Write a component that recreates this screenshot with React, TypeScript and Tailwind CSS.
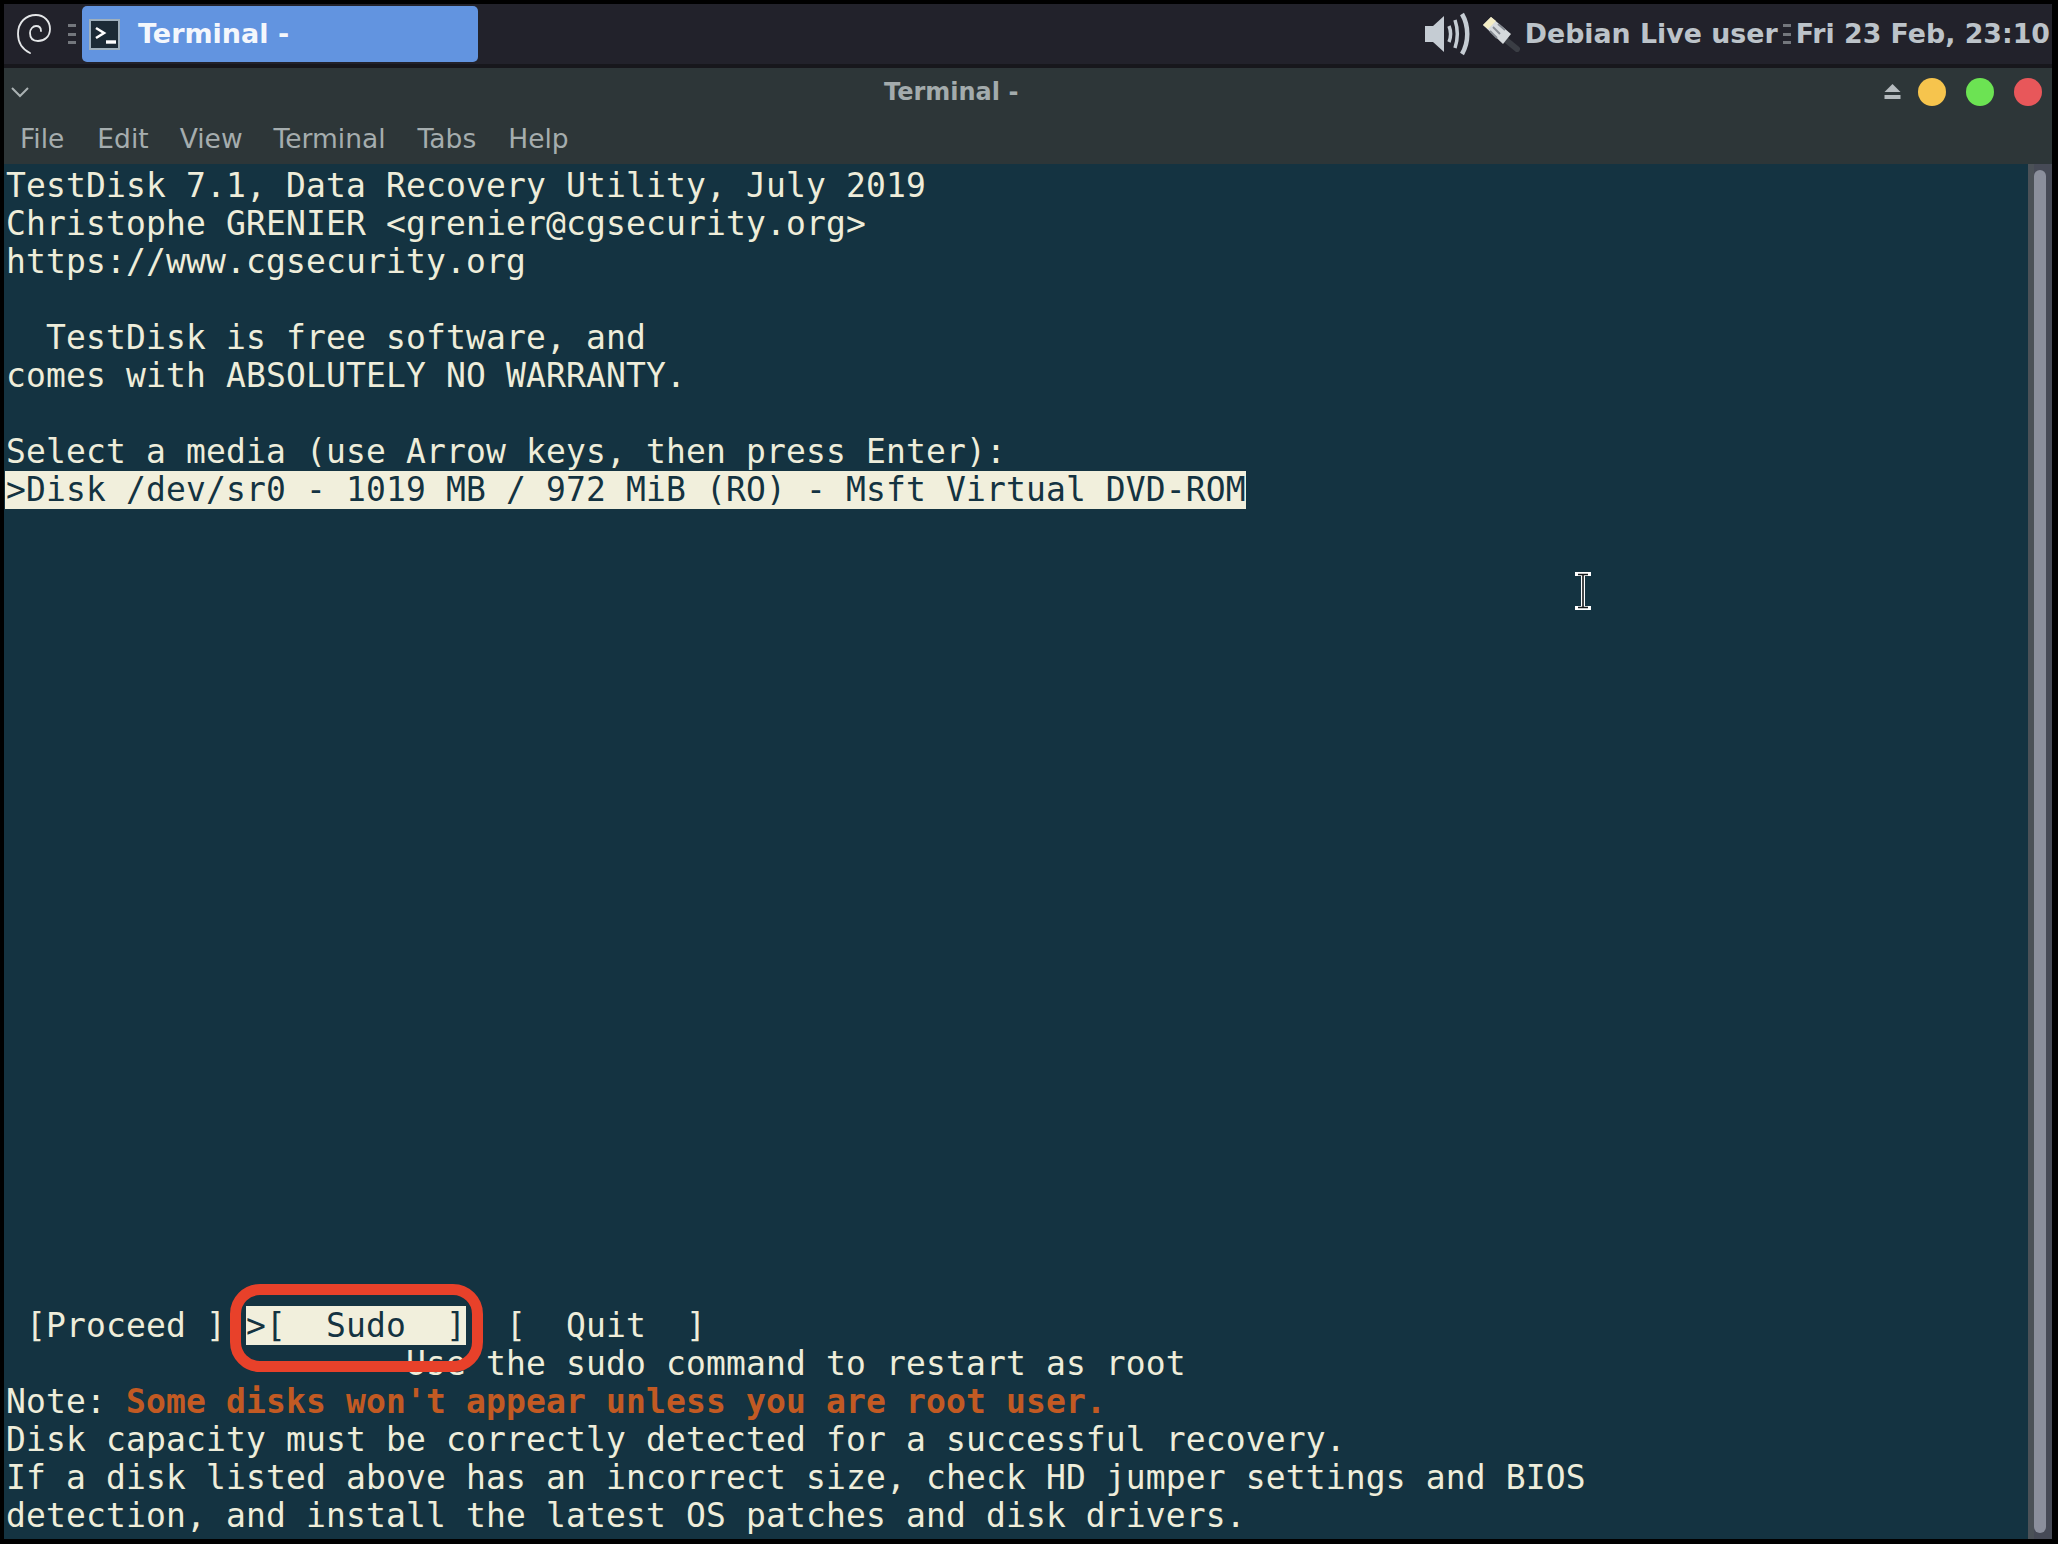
const mono = "font-['DejaVu_Sans_Mono',monospace]";

const TermLine = ({ children }: { children?: React.ReactNode }) => (
  <div className="h-[38px] pl-[2px] leading-[38px] whitespace-pre">{children}</div>
);

const DebianSwirl = () => (
  <svg width="34" height="42" viewBox="0 0 34 42" fill="none" className="shrink-0">
    <path
      d="M13 40C5 36 1 29 1 21C1 9 9 2 19 2C27 2 33 8 33 16C33 24 27 28 21 28C16 28 13 25 13 20C13 16 16 13 19 13C22 13 24 15 24 18"
      stroke="#e4e6e8"
      strokeWidth="1.8"
      strokeLinecap="round"
    />
  </svg>
);

const Handle = () => (
  <div className="flex h-[20px] w-[8px] shrink-0 flex-col justify-between">
    <div className="h-[3px] bg-[#74777d]" />
    <div className="h-[3px] bg-[#74777d]" />
    <div className="h-[3px] bg-[#74777d]" />
  </div>
);

const TerminalIcon = () => (
  <div className="relative ml-[7px] h-[31px] w-[31px] shrink-0 border-2 border-[#9fb0bd] bg-[#1c2b36]">
    <svg width="27" height="27" viewBox="0 0 27 27" fill="none">
      <path d="M5 7L13 12L5 17" stroke="#fff" strokeWidth="2.6" />
      <path d="M15 21H25" stroke="#fff" strokeWidth="3.4" />
    </svg>
  </div>
);

const Speaker = () => (
  <svg width="47" height="44" viewBox="0 0 47 44" fill="none" className="shrink-0">
    <path d="M0 14H8L19 4V40L8 30H0Z" fill="#c5ccd3" />
    <path d="M24 14C26 19 26 25 24 30" stroke="#c5ccd3" strokeWidth="3.5" />
    <path d="M30 8C33 17 33 27 30 36" stroke="#c5ccd3" strokeWidth="3.5" />
    <path d="M37 2C44 14 44 30 37 42" stroke="#c5ccd3" strokeWidth="4.5" />
  </svg>
);

const UsbPlug = () => (
  <svg width="38" height="36" viewBox="0 0 38 36" fill="none" className="shrink-0">
    <path d="M24 24L35 33" stroke="#3a3d44" strokeWidth="6" strokeLinecap="round" />
    <path d="M1 9L9 1L29 18L21 28Z" fill="#d5d9dc" />
    <path d="M1 9L9 1L14 5L6 13Z" fill="#f3ecc4" />
    <path d="M11 11L18 18M8 15L15 22M16 8L23 14" stroke="#868b92" strokeWidth="1.8" />
  </svg>
);

const Eject = () => (
  <svg width="17" height="16" viewBox="0 0 17 16" fill="#b6bcbf" className="shrink-0">
    <path d="M8.5 0L16.5 8H0.5Z" />
    <rect x="0.5" y="11" width="16" height="4" />
  </svg>
);

const IBeam = () => (
  <svg width="16" height="38" viewBox="0 0 16 38" fill="none" className="absolute left-[1571px] top-[408px]">
    <path d="M2 2H14M8 2V36M2 36H14" stroke="#fff" strokeWidth="4" strokeLinecap="square" />
    <path d="M3 2.5H13M8 3V35M3 35.5H13" stroke="#14181a" strokeWidth="1.6" />
  </svg>
);

export default function App() {
  return (
    <div className="flex h-[1544px] w-[2058px] flex-col bg-black pt-[4px] pr-[6px] pb-[5px] pl-[4px] font-['DejaVu_Sans',sans-serif]">
      {/* panel */}
      <div className="flex h-[60px] shrink-0 items-center bg-[#22222b]">
        <div className="ml-[13px] mr-[17px]">
          <DebianSwirl />
        </div>
        <Handle />
        <div className="ml-[6px] flex h-[56px] w-[396px] items-center rounded-[5px] bg-[#6294e0]">
          <TerminalIcon />
          <span className="ml-[18px] text-[27px] font-bold text-[#f4f7fc]">Terminal -</span>
        </div>
        <div className="ml-auto flex items-center pr-[2px] text-[26.8px] font-bold text-[#bcc3c9]">
          <Speaker />
          <div className="ml-[10px] mr-[5px]">
            <UsbPlug />
          </div>
          <span>Debian Live user</span>
          <div className="mx-[5px]">
            <Handle />
          </div>
          <span>Fri 23 Feb, 23:10</span>
        </div>
      </div>
      <div className="h-[4px] shrink-0 bg-[#17171c]" />

      {/* title bar */}
      <div className="flex h-[46px] shrink-0 items-center bg-[#2d3638] pt-[1px] pl-[7px] pr-[10px]">
        <svg width="18" height="12" viewBox="0 0 18 12" fill="none" className="shrink-0">
          <path d="M1 2L9 10L17 2" stroke="#aab2b3" strokeWidth="2" />
        </svg>
        <span className="ml-[855px] text-[24px] font-bold text-[#a3abac]">Terminal -</span>
        <div className="ml-auto flex items-center gap-[17px]">
          <Eject />
          <div className="flex items-center gap-[20px]">
            <div className="h-[28px] w-[28px] rounded-full bg-[#f6c44d]" />
            <div className="h-[28px] w-[28px] rounded-full bg-[#6ce353]" />
            <div className="h-[28px] w-[28px] rounded-full bg-[#e8575a]" />
          </div>
        </div>
      </div>

      {/* menu bar */}
      <div className="flex h-[50px] shrink-0 items-center gap-[33px] bg-[#2d3638] pl-[16px] text-[26.5px] text-[#a5adae]">
        <span>File</span>
        <span className="-ml-[0px]">Edit</span>
        <span className="-ml-[2px]">View</span>
        <span className="-ml-[2px]">Terminal</span>
        <span className="-ml-[1px]">Tabs</span>
        <span className="-ml-[1px]">Help</span>
      </div>

      {/* terminal */}
      <div className="relative flex min-h-0 flex-1">
        <div className={`min-w-0 flex-1 bg-[#143341] pt-[3px] text-[33px] tracking-[0.13px] text-[#eeedda] ${mono}`}>
          <TermLine>TestDisk 7.1, Data Recovery Utility, July 2019</TermLine>
          <TermLine>{"Christophe GRENIER <grenier@cgsecurity.org>"}</TermLine>
          <TermLine>https://www.cgsecurity.org</TermLine>
          <TermLine />
          <TermLine>{"  TestDisk is free software, and"}</TermLine>
          <TermLine>comes with ABSOLUTELY NO WARRANTY.</TermLine>
          <TermLine />
          <TermLine>Select a media (use Arrow keys, then press Enter):</TermLine>
          <TermLine>
            <span className="-ml-[1px] inline-block bg-[#f1efdc] pl-[1px] text-[#143341]">
              {">Disk /dev/sr0 - 1019 MB / 972 MiB (RO) - Msft Virtual DVD-ROM"}
            </span>
          </TermLine>
          <div className="h-[798px]" />
          <TermLine>
            {" [Proceed ] "}
            <span className="bg-[#f1efdc] text-[#143341]">{">[  Sudo  ]"}</span>
            {"  [  Quit  ]"}
          </TermLine>
          <TermLine>{"                    Use the sudo command to restart as root"}</TermLine>
          <TermLine>
            {"Note: "}
            <span className="font-bold text-[#c25a23]">{"Some disks won't appear unless you are root user."}</span>
          </TermLine>
          <TermLine>Disk capacity must be correctly detected for a successful recovery.</TermLine>
          <TermLine>If a disk listed above has an incorrect size, check HD jumper settings and BIOS</TermLine>
          <TermLine>detection, and install the latest OS patches and disk drivers.</TermLine>
        </div>

        {/* scrollbar */}
        <div className="flex w-[24px] shrink-0 border-l-[6px] border-[#4b5157] bg-[#464a56] pt-[6px] pb-[6px]">
          <div className="w-[12px] rounded-full bg-[#8b8f9c]" />
        </div>

        <IBeam />

        {/* red annotation */}
        <div className="absolute left-[226px] top-[1120px] h-[88px] w-[253px] rounded-[30px] border-[11px] border-[#e8412a]" />
      </div>
    </div>
  );
}
